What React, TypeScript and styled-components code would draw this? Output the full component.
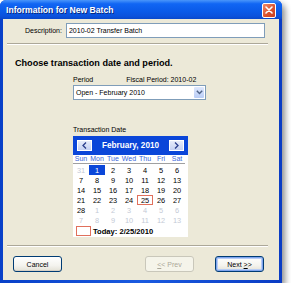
import styled, { createGlobalStyle } from "styled-components";

const GlobalStyle = createGlobalStyle`
  html, body {
    margin: 0;
    padding: 0;
    background: #ffffff;
  }
  body {
    font-family: "Liberation Sans", Arial, sans-serif;
  }
`;

const weekDays = ["Sun", "Mon", "Tue", "Wed", "Thu", "Fri", "Sat"];

type Day = { n: number; other?: boolean };

const days: Day[] = [
  { n: 31, other: true },
  ...Array.from({ length: 28 }, (_, i) => ({ n: i + 1 })),
  ...Array.from({ length: 13 }, (_, i) => ({ n: i + 1, other: true })),
];

function App() {
  return (
    <>
      <GlobalStyle />
      <Window>
        <TitleBar>
          <Title>Information for New Batch</Title>
          <CloseButton>
            <svg width="8" height="8" viewBox="0 0 8 8">
              <path d="M1 1 L7 7 M7 1 L1 7" stroke="#fff" strokeWidth="1.6" strokeLinecap="round" />
            </svg>
          </CloseButton>
        </TitleBar>
        <Body>
          <DescRow>
            <Label>Description:</Label>
            <TextBox>2010-02 Transfer Batch</TextBox>
          </DescRow>
          <Rule />
          <Heading>Choose transaction date and period.</Heading>
          <Fields>
            <LabelRow>
              <Label>Period</Label>
              <Label>Fiscal Period: 2010-02</Label>
            </LabelRow>
            <Select>
              <span>Open - February 2010</span>
              <DropButton>
                <svg width="7" height="5" viewBox="0 0 7 5">
                  <path d="M0.8 0.8 L3.5 3.6 L6.2 0.8" stroke="#4d6185" strokeWidth="1.4" fill="none" />
                </svg>
              </DropButton>
            </Select>
            <DateLabel>Transaction Date</DateLabel>
            <Calendar>
              <CalHeader>
                <NavButton>
                  <svg width="5" height="7" viewBox="0 0 5 7">
                    <path d="M4 0.5 L1 3.5 L4 6.5" stroke="#2a3e8c" strokeWidth="1.3" fill="none" />
                  </svg>
                </NavButton>
                <Month>February, 2010</Month>
                <NavButton>
                  <svg width="5" height="7" viewBox="0 0 5 7">
                    <path d="M1 0.5 L4 3.5 L1 6.5" stroke="#2a3e8c" strokeWidth="1.3" fill="none" />
                  </svg>
                </NavButton>
              </CalHeader>
              <WeekRow>
                {weekDays.map((d) => (
                  <WeekDay key={d}>{d}</WeekDay>
                ))}
              </WeekRow>
              <DayGrid>
                {days.map((d, i) => (
                  <DayCell
                    key={i}
                    $other={!!d.other}
                    $selected={!d.other && d.n === 1}
                    $today={!d.other && d.n === 25}
                  >
                    {d.n}
                  </DayCell>
                ))}
              </DayGrid>
              <TodayRow>
                <TodayBox />
                <span>Today: 2/25/2010</span>
              </TodayRow>
            </Calendar>
          </Fields>
          <BottomRule />
          <ButtonRow>
            <Button>Cancel</Button>
            <RightButtons>
              <Button disabled>
                <u>&lt;</u>&lt; Prev
              </Button>
              <Button $default>
                Next <u>&gt;</u>&gt;
              </Button>
            </RightButtons>
          </ButtonRow>
        </Body>
      </Window>
    </>
  );
}

const Window = styled.div`
  width: 282px;
  height: 283px;
  display: flex;
  flex-direction: column;
  background: linear-gradient(to right, #0840c8, #1a5ae0 50%, #0a3cc4);
  border-radius: 6px 6px 0 0;
  box-shadow: 3px 4px 6px rgba(0, 0, 0, 0.45);
  overflow: hidden;
`;

const TitleBar = styled.div`
  height: 19px;
  flex: none;
  display: flex;
  align-items: center;
  justify-content: space-between;
  padding: 0 6px 0 6px;
  background: linear-gradient(to bottom, #4a96fa 0%, #1166f4 20%, #0a5ae8 60%, #0b52dc 85%, #0848cc 100%);
`;

const Title = styled.span`
  color: #ffffff;
  font-weight: 700;
  font-size: 8.6px;
  text-shadow: 1px 1px 0 #0a2a80;
`;

const CloseButton = styled.div`
  width: 12px;
  height: 13px;
  margin-top: 1px;
  border: 1px solid #ffffff;
  border-radius: 2px;
  background: linear-gradient(135deg, #f08a6a, #d8502c 60%, #c84020);
  display: flex;
  align-items: center;
  justify-content: center;
`;

const Body = styled.div`
  flex: 1;
  margin: 0 3px 3px 3px;
  background: #ece9d8;
  display: flex;
  flex-direction: column;
  font-size: 7px;
  color: #000;
`;

const DescRow = styled.div`
  display: flex;
  align-items: center;
  gap: 4px;
  padding: 4px 0 0 22px;
`;

const Label = styled.span`
  font-size: 7px;
  color: #000;
`;

const TextBox = styled.div`
  width: 195px;
  height: 13px;
  border: 1px solid #7f9db9;
  background: #fff;
  display: flex;
  align-items: center;
  padding-left: 2px;
`;

const Rule = styled.div`
  margin: 5px 11px 0 4px;
  height: 0;
  border-top: 1px solid #aca899;
  border-bottom: 1px solid #ffffff;
`;

const Heading = styled.div`
  margin: 13px 0 0 12px;
  font-weight: 700;
  font-size: 9.1px;
`;

const Fields = styled.div`
  margin: 8px 0 0 70px;
  display: flex;
  flex-direction: column;
`;

const LabelRow = styled.div`
  display: flex;
  gap: 33px;
  width: 131px;
`;

const Select = styled.div`
  margin-top: 2px;
  width: 129px;
  height: 13px;
  border: 1px solid #7f9db9;
  background: #fff;
  display: flex;
  align-items: center;
  justify-content: space-between;
  padding-left: 2px;
  box-sizing: content-box;
`;

const DropButton = styled.div`
  width: 10px;
  height: 11px;
  margin-right: 1px;
  border-radius: 1px;
  background: linear-gradient(to bottom, #dfe8fd, #b9cdf6);
  display: flex;
  align-items: center;
  justify-content: center;
`;

const DateLabel = styled.div`
  margin-top: 26px;
`;

const Calendar = styled.div`
  margin-top: 3px;
  width: 115px;
  background: #fff;
  display: flex;
  flex-direction: column;
  padding-bottom: 1px;
`;

const CalHeader = styled.div`
  height: 19px;
  background: #0a46d9;
  display: flex;
  align-items: center;
  justify-content: space-between;
  padding: 0 4px;
`;

const NavButton = styled.div`
  width: 13px;
  height: 9px;
  border: 1px solid #ffffff;
  background: linear-gradient(to bottom, #e7ecfa, #c5d1f2);
  display: flex;
  align-items: center;
  justify-content: center;
`;

const Month = styled.span`
  color: #fff;
  font-weight: 700;
  font-size: 8.2px;
`;

const WeekRow = styled.div`
  display: grid;
  grid-template-columns: repeat(7, 16px);
  height: 8px;
  border-bottom: 1px solid #a0a0a0;
  margin-right: 3px;
  align-items: center;
`;

const WeekDay = styled.span`
  text-align: center;
  color: #3a66d8;
  font-size: 7px;
  line-height: 8px;
`;

const DayGrid = styled.div`
  margin-top: 1px;
  display: grid;
  grid-template-columns: repeat(7, 16px);
  grid-auto-rows: 10px;
`;

const DayCell = styled.span<{ $other: boolean; $selected: boolean; $today: boolean }>`
  display: flex;
  align-items: center;
  justify-content: center;
  font-size: 7.4px;
  color: ${(p) => (p.$selected ? "#ffffff" : p.$other ? "#c4cad6" : "#000000")};
  background: ${(p) => (p.$selected ? "#0a46d9" : "transparent")};
  box-shadow: ${(p) => (p.$today ? "inset 0 0 0 1px #e0705c" : "none")};
`;

const TodayRow = styled.div`
  display: flex;
  align-items: center;
  gap: 2px;
  padding: 1px 0 0 3px;
  font-weight: 700;
  font-size: 7.6px;
`;

const TodayBox = styled.div`
  width: 13px;
  height: 8px;
  border: 1px solid #e0705c;
`;

const BottomRule = styled.div`
  margin: 8px 11px 0 4px;
  height: 0;
  border-top: 1px solid #aca899;
  border-bottom: 1px solid #ffffff;
`;

const ButtonRow = styled.div`
  display: flex;
  justify-content: space-between;
  padding: 9px 15px 0 10px;
`;

const RightButtons = styled.div`
  display: flex;
  gap: 21px;
`;

const Button = styled.button<{ $default?: boolean }>`
  width: 49px;
  height: 16px;
  padding: 0;
  font-family: "Liberation Sans", Arial, sans-serif;
  font-size: 7px;
  color: #000;
  border: 1px solid #003c74;
  border-radius: 3px;
  background: linear-gradient(to bottom, #ffffff 0%, #f4f3ee 60%, #e3e1d6 100%);
  box-shadow: ${(p) => (p.$default ? "inset 0 0 0 1px #7ea4ee, inset 0 0 0 2px #b8cdf5" : "inset 0 -1px 0 #d6d0c5")};
  &:disabled {
    color: #aca899;
    border-color: #c9c7ba;
    background: #f5f4ea;
    box-shadow: none;
  }
`;

export default App;
